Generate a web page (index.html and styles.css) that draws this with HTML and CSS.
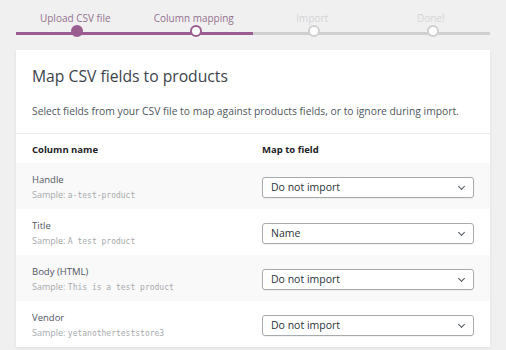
FILE: index.html
```html
<!DOCTYPE html>
<html>
<head>
	<title>Import products</title>
	<meta name="viewport" content="width=device-width, initial-scale=1.0">
	<link rel="stylesheet" href="styles.css">
</head>
<body>

	<ol class="steps">
		<li class="done">Upload CSV file</li>
		<li class="active">Column mapping</li>
		<li>Import</li>
		<li>Done!</li>
	</ol>

	<div class="card">
		<header class="card-head">
			<h2>Map CSV fields to products</h2>
			<p>Select fields from your CSV file to map against products fields, or to ignore during import.</p>
		</header>

		<table class="mapping">
			<thead>
				<tr>
					<th>Column name</th>
					<th>Map to field</th>
				</tr>
			</thead>
			<tbody>
				<tr>
					<td>
						<div class="name">Handle</div>
						<div class="sample">Sample: <code>a-test-product</code></div>
					</td>
					<td>
						<div class="select">Do not import <span class="arrow"></span></div>
					</td>
				</tr>
				<tr>
					<td>
						<div class="name">Title</div>
						<div class="sample">Sample: <code>A test product</code></div>
					</td>
					<td>
						<div class="select">Name <span class="arrow"></span></div>
					</td>
				</tr>
				<tr>
					<td>
						<div class="name">Body (HTML)</div>
						<div class="sample">Sample: <code>This is a test product</code></div>
					</td>
					<td>
						<div class="select">Do not import <span class="arrow"></span></div>
					</td>
				</tr>
				<tr>
					<td>
						<div class="name">Vendor</div>
						<div class="sample">Sample: <code>yetanotherteststore3</code></div>
					</td>
					<td>
						<div class="select">Do not import <span class="arrow"></span></div>
					</td>
				</tr>
			</tbody>
		</table>
	</div>

</body>
</html>
```

FILE: styles.css
```css
*{
	box-sizing: border-box;
}
html,body{
	width: 100%;
	height: 100%;
}
body{
	margin: 0px;
	padding: 0px 16px;
	background: #f0f0f1;
	font-family: 'Open Sans', sans-serif;
	color: #3c434a;
	overflow: hidden;
}

.steps{
	list-style: none;
	margin: 0px;
	padding: 11px 0px 0px;
	display: flex;
	height: 50px;
}

.steps li{
	flex: 1;
	position: relative;
	text-align: center;
	font-size: 10px;
	line-height: 14px;
	color: #d4d4d4;
	border-bottom: 3px solid #d0d0d0;
	height: 23.5px;
}

.steps li.done,.steps li.active{
	color: #93708d;
	border-bottom-color: #9b5c8f;
}

.steps li::after{
	content: "";
	position: absolute;
	left: 50%;
	bottom: -5.5px;
	width: 8px;
	height: 8px;
	margin-left: -4px;
	border-radius: 50%;
	background: #fff;
	border: 2px solid #cfcfcf;
}

.steps li.done::after{
	background: #9b5c8f;
	border-color: #9b5c8f;
}

.steps li.active::after{
	border-color: #9b5c8f;
}

.card{
	background: #fff;
	box-shadow: 0px 1px 3px rgba(0,0,0,0.08);
}

.card-head{
	padding: 14px 16px 0px;
	border-bottom: 1px solid #ececec;
}

.card-head h2{
	margin: 0px;
	font-size: 15.7px;
	font-weight: 400;
	line-height: 24px;
	color: #3c434a;
}

.card-head p{
	margin: 0px;
	padding: 16px 0px 15px;
	font-size: 10.3px;
	line-height: 14px;
	color: #50575e;
}

.mapping{
	width: 100%;
	border-collapse: collapse;
}

.mapping th{
	text-align: left;
	font-size: 9.5px;
	font-weight: 700;
	color: #1d2327;
	padding: 8px 16px 7px;
	height: 29px;
}

.mapping td{
	padding: 9px 16px 0px;
	height: 46px;
	vertical-align: top;
}

.mapping td:last-child{
	padding-top: 14px;
}

.mapping th:first-child,.mapping td:first-child{
	width: 230px;
}

.mapping tbody tr:nth-child(odd){
	background: #f9f9f9;
}

.name{
	font-size: 9.5px;
	line-height: 15px;
	color: #50575e;
}

.sample{
	font-size: 9px;
	line-height: 16px;
	color: #a7aaad;
}

.sample code{
	font-family: 'DejaVu Sans Mono', monospace;
	font-size: 8px;
}

.select{
	position: relative;
	height: 21px;
	border: 1px solid #a7aaad;
	border-radius: 3px;
	background: #fff;
	font-size: 10.5px;
	line-height: 19px;
	padding: 0px 8px;
	color: #2c3338;
	box-shadow: 0px 1px 1px rgba(0,0,0,0.05);
}

.select .arrow{
	position: absolute;
	right: 9px;
	top: 6px;
	width: 5px;
	height: 5px;
	border-right: 1.3px solid #50575e;
	border-bottom: 1.3px solid #50575e;
	transform: rotate(45deg);
}
```
